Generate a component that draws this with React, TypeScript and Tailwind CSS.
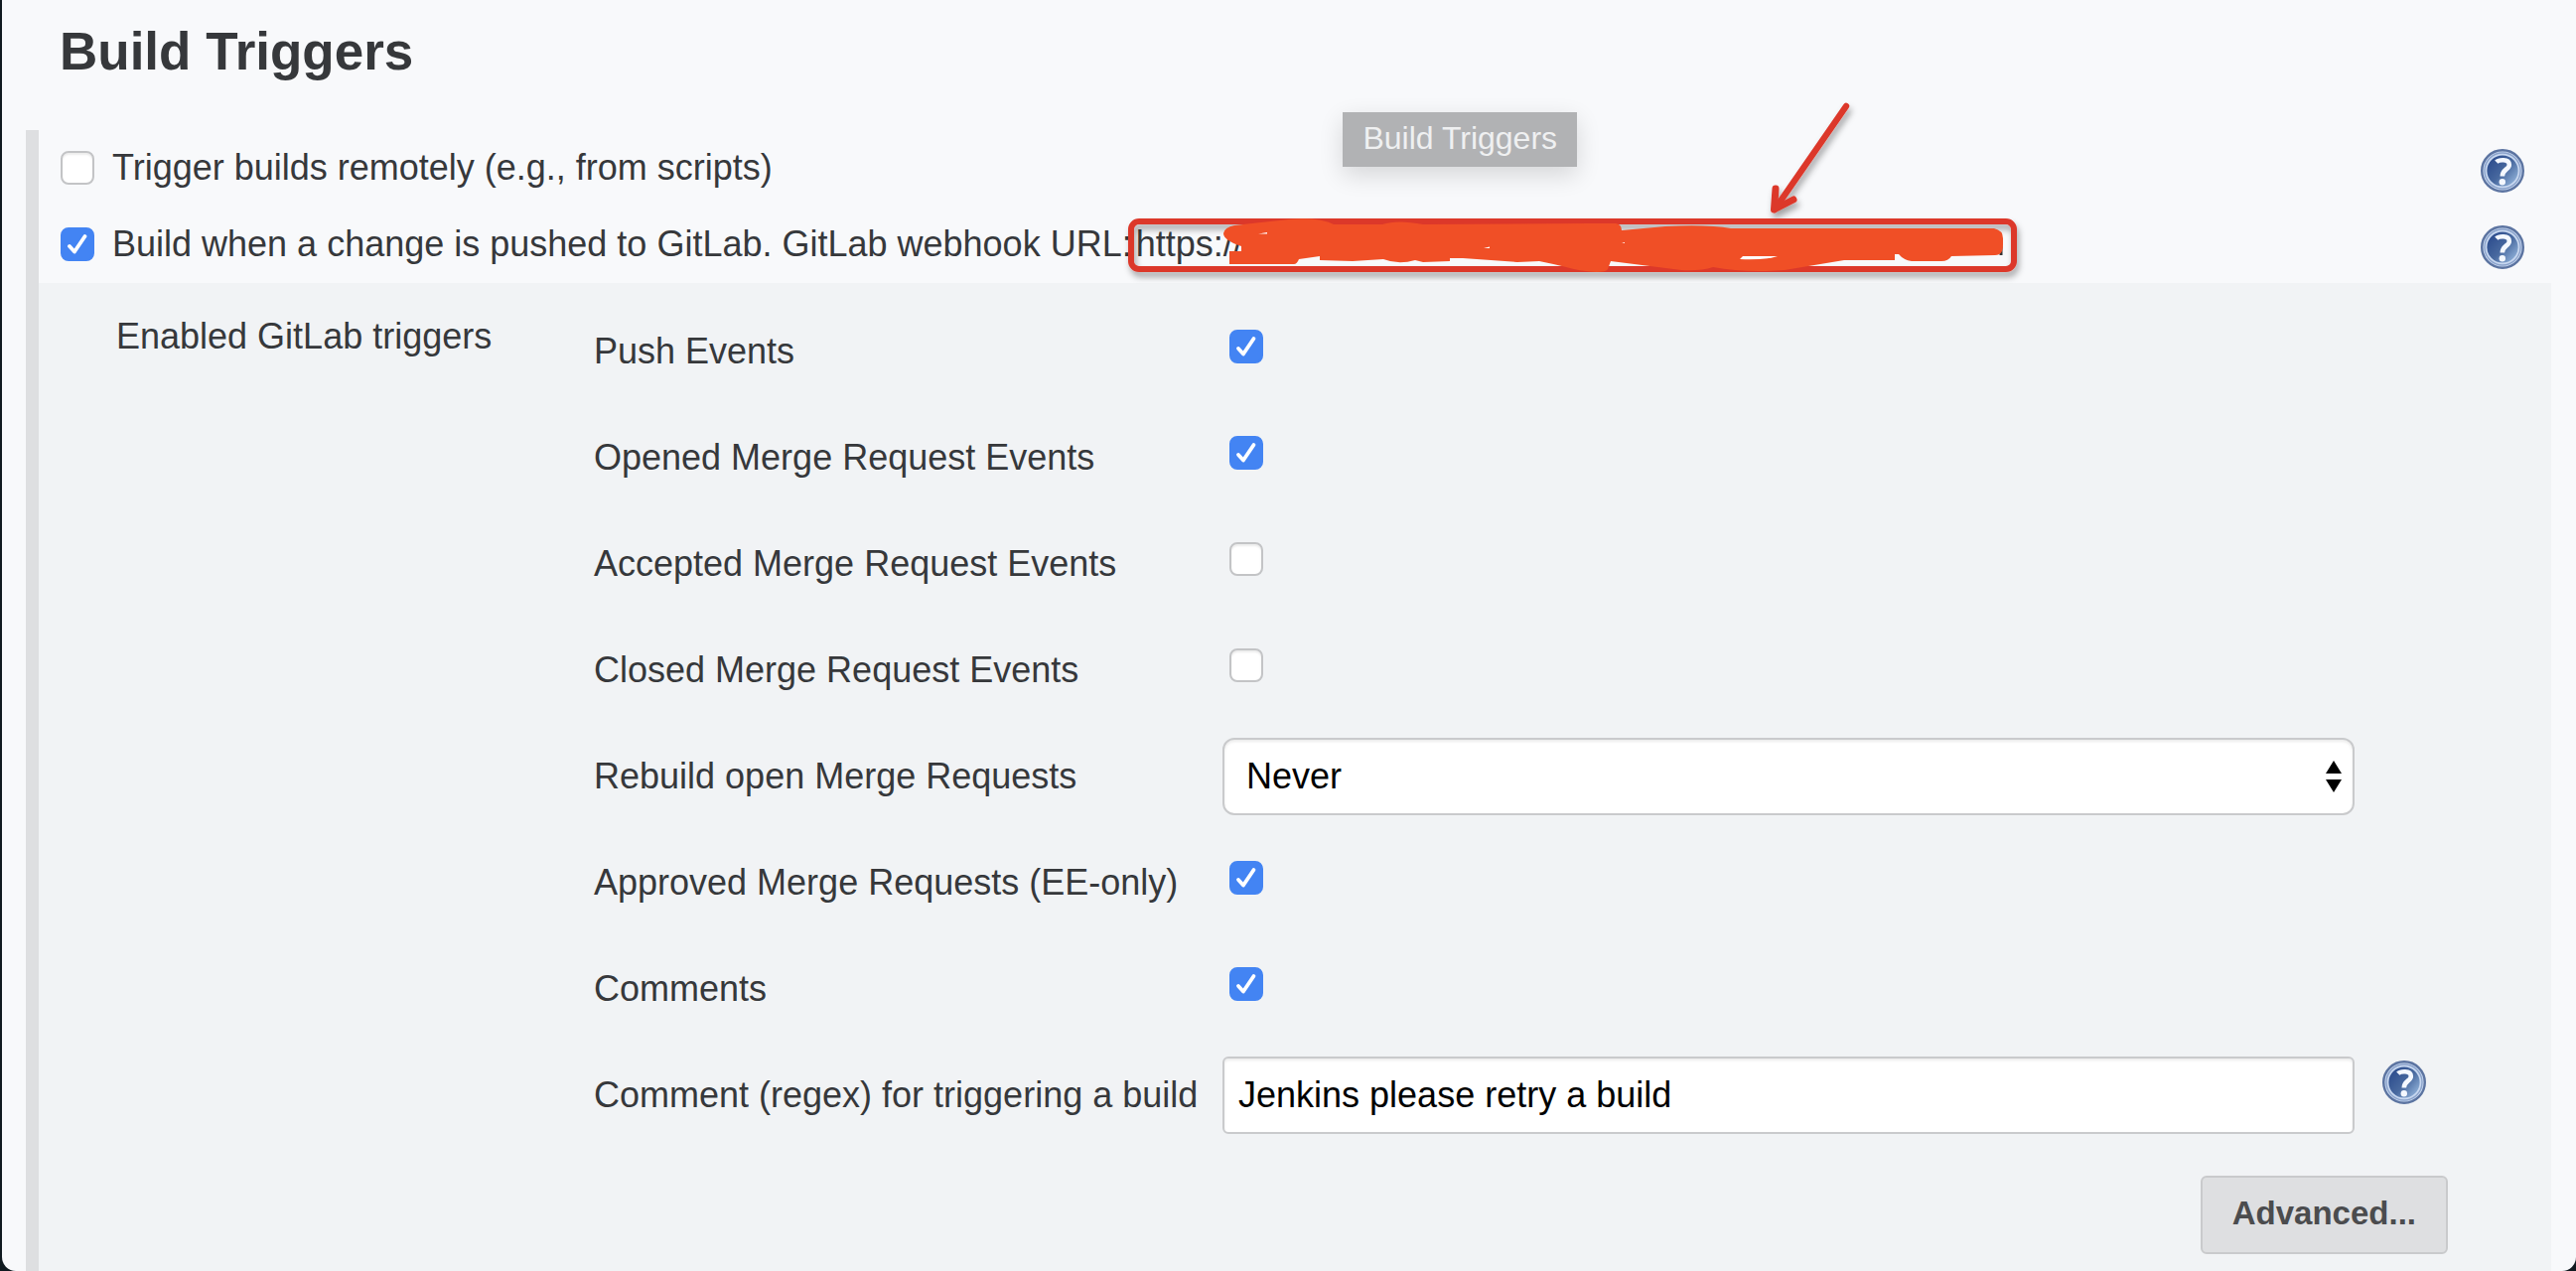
import React, { useId } from "react";

const CHECKBOX =
  "peer block size-[34px] appearance-none rounded-[8px] border-2 border-[#c3c4c6] bg-white shadow-[inset_0_2px_2px_rgba(0,0,0,0.08)] checked:border-[#4384f3] checked:bg-[#4384f3] checked:shadow-none";

function Checkbox({ id, defaultChecked = false }: { id: string; defaultChecked?: boolean }) {
  return (
    <span className="relative block size-[34px] shrink-0">
      <input id={id} type="checkbox" defaultChecked={defaultChecked} className={CHECKBOX} />
      <svg
        viewBox="0 0 34 34"
        aria-hidden="true"
        className="pointer-events-none absolute inset-0 hidden size-[34px] peer-checked:block"
      >
        <path
          d="M9 19 L14 24.500 L24.500 9"
          fill="none"
          stroke="#fff"
          strokeWidth="3.8"
          strokeLinecap="round"
          strokeLinejoin="round"
        />
      </svg>
    </span>
  );
}

function HelpButton({ topic }: { topic: string }) {
  const gradient = useId();
  return (
    <button type="button" aria-label={`Help for ${topic}`} className="block size-[44px] shrink-0">
      <svg viewBox="0 0 44 44" className="size-[44px]" aria-hidden="true">
        <defs>
          <linearGradient id={gradient} x1="0.1" y1="0.2" x2="0.9" y2="0.9">
            <stop offset="0" stopColor="#2f4f8f" />
            <stop offset="0.5" stopColor="#48699f" />
            <stop offset="1" stopColor="#8fb0d8" />
          </linearGradient>
        </defs>
        <circle cx="22" cy="22" r="20.8" fill="#c8d8f0" stroke="#5c74a1" strokeWidth="2.4" />
        <circle cx="22" cy="22" r="18" fill="none" stroke="#8ba3cb" strokeWidth="1.4" />
        <circle cx="22" cy="22" r="15.6" fill={`url(#${gradient})`} />
        <path
          d="M15.8 13.200 C18 11 28.500 9.500 28.800 15.800 C29 20.500 21.800 20.500 21.800 27.500"
          fill="none"
          stroke="#f4f8ff"
          strokeWidth="4.6"
        />
        <circle cx="21.8" cy="33.200" r="3.200" fill="#f4f8ff" />
      </svg>
    </button>
  );
}

/* Red frame, marker strokes and arrow drawn over the webhook address. */
function Annotation() {
  return (
    <svg
      viewBox="0 -110 910 190"
      aria-hidden="true"
      className="pointer-events-none absolute -left-[14px] -top-[124px] h-[190px] w-[910px] max-w-none"
    >
      <defs>
        <filter id="mark-shadow" x="-10%" y="-20%" width="120%" height="150%">
          <feDropShadow dx="2" dy="5" stdDeviation="3" floodColor="#000" floodOpacity="0.35" />
        </filter>
      </defs>
      <g filter="url(#mark-shadow)" fill="none" stroke="#dc382b" strokeLinecap="round" strokeLinejoin="round">
        <rect x="9" y="13" width="889" height="48" rx="8" strokeWidth="6" />
        <path d="M729 -103 L657 1" strokeWidth="6.4" />
        <path d="M658 -20 L656.5 1 L676 -9" strokeWidth="7" />
      </g>
      <path d="M885 38 V47" stroke="#333" strokeWidth="3" />
      <path
        fill="#f04f26"
        d="M102 25 Q103 19 113 17 L170 10.700 Q200 9 213 16 H262 Q277 11 303 16 L470 15 H497 Q503 16 503 22 L547 18 Q590 16 613 20 H753 L878 20 Q887 22 887 30 V37 Q887 47 879 47 L835 48 Q832 53 825 53 H795 Q787 52 782 46 H778 V52 H727 L667 62 Q627 65 595 59 Q583 63 563 62 L492 53 L489 61 Q488 64 477 64 Q460 63 447 59 Q435 56 420 53 L398 54 L343 50 H330 V53 L303 54 L295 52 Q278 57 263 51 L232 53 L199 52 V48 L178 51 Q176 56 173 56 H108 V43 H120 V38 Q102 32 102 25 Z"
      />
      <g fill="#fff">
        <path d="M137 25.500 L146 24 V25.500 Z" />
        <path d="M364 40 L370 38.500 V40 Z" />
        <path d="M622 51 L625 48 H660 Q648 52 622 51 Z" />
        <path d="M503 35 L506 34 V35 Z" />
      </g>
    </svg>
  );
}

function TriggerRow({
  id,
  label,
  checked,
  help,
  children,
}: {
  id: string;
  label: string;
  checked?: boolean;
  help: string;
  children?: React.ReactNode;
}) {
  return (
    <div className="flex h-[77px] items-center pb-[2px] pl-[22px] pr-[52px]">
      <Checkbox id={id} defaultChecked={checked} />
      <label htmlFor={id} className="ml-[18px] whitespace-nowrap">
        {label}
      </label>
      {children}
      <span className="ml-auto pt-[6px]">
        <HelpButton topic={help} />
      </span>
    </div>
  );
}

function SettingRow({ id, label, children }: { id: string; label: string; children: React.ReactNode }) {
  return (
    <div className="flex h-[107px] items-center">
      <label htmlFor={id} className="w-[633px] shrink-0 whitespace-nowrap">
        {label}
      </label>
      {children}
    </div>
  );
}

function EventRow({ id, label, checked }: { id: string; label: string; checked?: boolean }) {
  return (
    <SettingRow id={id} label={label}>
      <span className="pb-[10px] pl-[7px]">
        <Checkbox id={id} defaultChecked={checked} />
      </span>
    </SettingRow>
  );
}

export default function App() {
  return (
    <div className="min-h-screen bg-[#101a20] pl-[2px]">
      <main
        className="relative flex min-h-screen flex-col rounded-b-[14px] bg-[#f8f9fb] text-[36px] leading-[44px] text-[#36383b]"
        style={{ fontFamily: '"Liberation Sans", Arial, sans-serif' }}
      >
        <h1 className="px-[58px] pb-[47px] pt-[20px] text-[53px] font-bold leading-[64px]">Build Triggers</h1>

        <div
          role="tooltip"
          className="absolute left-[52.1%] top-[113px] bg-[#b1b2b4] px-[20px] pb-[9px] pt-[6px] text-[32px] leading-[40px] text-[#eff0f1] shadow-[0_8px_24px_rgba(0,0,0,0.14)]"
        >
          Build Triggers
        </div>

        <section className="ml-[24px] flex grow flex-col border-l-[13px] border-[#dedfe1]">
          <TriggerRow id="remote" label="Trigger builds remotely (e.g., from scripts)" help="remote triggers" />
          <TriggerRow
            id="gitlab"
            label="Build when a change is pushed to GitLab. GitLab webhook URL:"
            checked
            help="the GitLab webhook"
          >
            <span className="relative ml-[4px] whitespace-nowrap">
              https://
              <Annotation />
            </span>
          </TriggerRow>

          <div className="mr-[25px] flex grow bg-[#f1f3f5] pt-[15px]">
            <h2 className="w-[559px] shrink-0 whitespace-nowrap pl-[78px] pt-[17px]">Enabled GitLab triggers</h2>
            <div className="min-w-0 grow">
              <EventRow id="push" label="Push Events" checked />
              <EventRow id="opened" label="Opened Merge Request Events" checked />
              <EventRow id="accepted" label="Accepted Merge Request Events" />
              <EventRow id="closed" label="Closed Merge Request Events" />
              <SettingRow id="rebuild" label="Rebuild open Merge Requests">
                <span className="relative mr-[198px] block grow">
                  <select
                    id="rebuild"
                    defaultValue="never"
                    className="block h-[78px] w-full appearance-none rounded-[12px] border-2 border-[#c9cacc] bg-white px-[22px] text-black shadow-[inset_0_2px_3px_rgba(0,0,0,0.08)]"
                  >
                    <option value="never">Never</option>
                    <option value="source">On push to source branch</option>
                    <option value="both">On push to source or target branch</option>
                  </select>
                  <svg
                    viewBox="0 0 16 32"
                    aria-hidden="true"
                    className="pointer-events-none absolute right-[13px] top-[23px] h-[32px] w-[16px]"
                  >
                    <path d="M8 0 L16 13 H0 Z M8 32 L16 19 H0 Z" fill="#000" />
                  </svg>
                </span>
              </SettingRow>
              <EventRow id="approved" label="Approved Merge Requests (EE-only)" checked />
              <EventRow id="comments" label="Comments" checked />
              <SettingRow id="regex" label="Comment (regex) for triggering a build">
                <input
                  id="regex"
                  type="text"
                  defaultValue="Jenkins please retry a build"
                  className="h-[78px] min-w-0 grow rounded-[6px] border-2 border-[#c9cacc] bg-white px-[14px] text-black shadow-[inset_0_2px_3px_rgba(0,0,0,0.08)]"
                />
                <span className="ml-[28px] mr-[126px] pb-[26px]">
                  <HelpButton topic="the comment pattern" />
                </span>
              </SettingRow>
              <div className="flex justify-end pb-[17px] pr-[104px] pt-[28px]">
                <button
                  type="button"
                  className="h-[79px] rounded-[6px] border-2 border-[#c9cacc] bg-[#dedfe1] px-[30px] pb-[4px] text-[33px] font-bold text-[#4b4c4e]"
                >
                  Advanced...
                </button>
              </div>
            </div>
          </div>
        </section>
      </main>
    </div>
  );
}
